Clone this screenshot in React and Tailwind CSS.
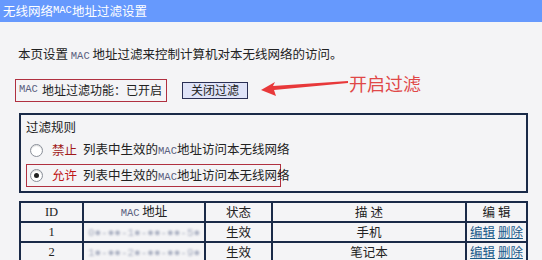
import React from "react";

const cjk = { fontFamily: '"Noto Sans CJK SC", "Noto Sans", sans-serif' };

const Mac = ({ className = "" }) => (
  <span className={`font-['Liberation_Mono',monospace] text-[10.5px] text-[#5a6080] ${className}`}>MAC</span>
);

const Radio = ({ checked }) => (
  <span className="shrink-0 w-[13px] h-[13px] rounded-full border border-[#8a8f99] bg-white flex items-center justify-center shadow-[inset_0_1px_1px_rgba(0,0,0,0.15)]">
    {checked && <span className="w-[5px] h-[5px] rounded-full bg-[#222]" />}
  </span>
);

const Blur = ({ text }) => (
  <span className="text-[#aab0c2] blur-[1px] font-['Liberation_Mono',monospace] text-[11px]">{text}</span>
);

const rows = [
  { id: 1, mac: "0●-●●-1●-●●-●●-5●", desc: "手机" },
  { id: 2, mac: "1●-●●-2●-●●-●●-9●", desc: "笔记本" },
];

const cell = "border-2 border-[#1a2a48] p-0 h-[20px] leading-[16px]";

export default function App() {
  return (
    <div className="w-[542px] h-[260px] overflow-hidden bg-[#f4f4f6] text-[12.5px] text-[#222] whitespace-nowrap" style={cjk}>
      {/* Title bar */}
      <div className="h-[22px] bg-[#6699fd] text-white pl-[3px] flex items-center text-[12.5px]">
        无线网络<Mac className="text-white text-[9px]" />地址过滤设置
      </div>

      <div className="pl-[18px] pt-[24px] h-[16px] box-content leading-[16px]">
        本页设置 <Mac /> 地址过滤来控制计算机对本无线网络的访问。
      </div>

      {/* Status row */}
      <div className="flex items-center mt-[16px] h-[24px]">
        <div className="ml-[15px] w-[152px] h-[23px] border border-[#b03040] flex items-center pl-[3px] text-[12px]">
          <Mac className="mr-[4px]" />地址过滤功能：已开启
        </div>
        <button className="ml-[15px] w-[66px] h-[17px] bg-[#dfe3f8] border border-[#2a2f55] flex items-center justify-center text-[12px] leading-none">
          关闭过滤
        </button>
        <svg width="88" height="20" viewBox="0 0 88 20" className="ml-[13px] -mt-[6px]">
          <polygon points="0,13 14,5 12,9 87,4 87,6 13,13 15,19" fill="#e8383a" />
        </svg>
        <span className="-mt-[14px] text-[18px] text-[#e04848]">开启过滤</span>
      </div>

      {/* Rules box */}
      <div className="ml-[19px] mt-[11px] w-[509px] h-[80px] border-2 border-[#1a2a48] flex flex-col">
        <div className="pl-[5px] pt-[3px] leading-[18px]">过滤规则</div>
        <div className="flex items-center pl-[9px] mt-[5px] h-[18px]">
          <Radio />
          <span className="ml-[9px] text-[#a01818]">禁止</span>
          <span className="ml-[6px]">列表中生效的<Mac />地址访问本无线网络</span>
        </div>
        <div className="ml-[5px] mt-[5px] w-[255px] h-[23px] border border-[#b03040] flex items-center pl-[3px]">
          <Radio checked />
          <span className="ml-[9px] text-[#c01818]">允许</span>
          <span className="ml-[6px]">列表中生效的<Mac />地址访问本无线网络</span>
        </div>
      </div>

      {/* Table */}
      <table className="ml-[19px] mt-[8px] w-[509px] border-collapse border-2 border-[#1a2a48] text-center text-[12.5px]">
        <thead>
          <tr>
            <th className={`${cell} w-[63px] font-normal font-['Liberation_Serif',serif]`}>ID</th>
            <th className={`${cell} w-[122px] font-normal`}><Mac /> 地址</th>
            <th className={`${cell} w-[67px] font-normal`}>状态</th>
            <th className={`${cell} w-[194px] font-normal`}>描 述</th>
            <th className={`${cell} font-normal`}>编 辑</th>
          </tr>
        </thead>
        <tbody>
          {rows.map((r) => (
            <tr key={r.id}>
              <td className={`${cell} font-['Liberation_Serif',serif]`}>{r.id}</td>
              <td className={cell}><Blur text={r.mac} /></td>
              <td className={cell}>生效</td>
              <td className={cell}>{r.desc}</td>
              <td className={`${cell} text-[#1a5a8a]`}>
                <a className="underline">编辑</a> <a className="underline">删除</a>
              </td>
            </tr>
          ))}
        </tbody>
      </table>
    </div>
  );
}
